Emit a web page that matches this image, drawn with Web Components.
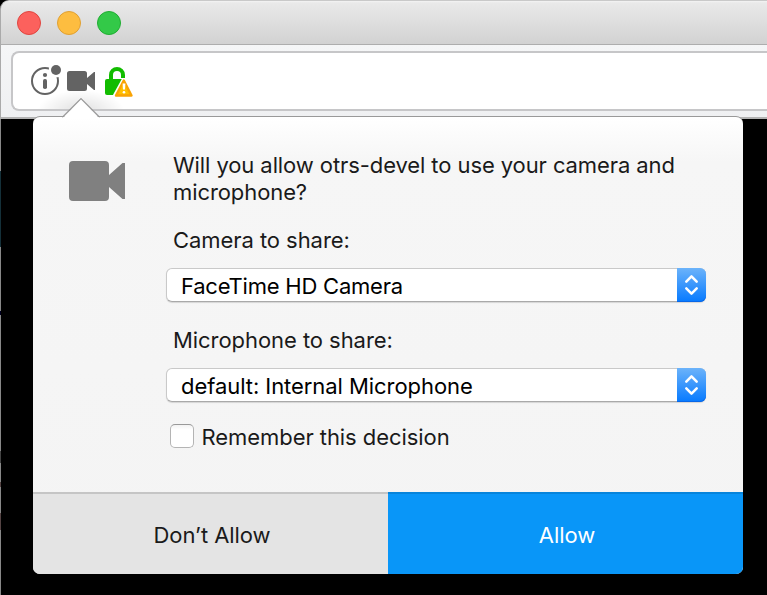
<!DOCTYPE html>
<html lang="en">
<head>
<meta charset="utf-8">
<title>Permission request</title>
<style>
html, body { margin: 0; height: 100%; overflow: hidden; background: #000; }
body { font-family: Inter, "Liberation Sans", sans-serif; font-size: 22px; letter-spacing: -0.06px; color: #1a1a1a; }
</style>
</head>
<body>
<browser-window></browser-window>
<script>
const define = (name, html) => customElements.define(name, class extends HTMLElement {
  constructor() {
    super();
    this.attachShadow({ mode: 'open' }).innerHTML = html;
  }
});

define('title-bar', `
<style>
:host { display: flex; box-sizing: border-box; height: 45px; padding: 11px 0 0 15px; gap: 14px;
  background: linear-gradient(#f4f4f4 0, #e9e9e9 2px, #d2d2d2 43px); border-bottom: 1px solid #adadad;
  border-top: 1px solid #c9c9c9; border-left: 1px solid #aaa; border-top-left-radius: 9px; }
i { box-sizing: border-box; width: 24px; height: 24px; margin: -1px 1px; border-radius: 50%; border: 1px solid; }
.r { background: #fc615d; border-color: #e0453f; }
.y { background: #fdbd40; border-color: #e0a032; }
.g { background: #33c948; border-color: #20ad32; }
</style><i class="r"></i><i class="y"></i><i class="g"></i>`);

define('tool-bar', `
<style>
:host { display: block; box-sizing: border-box; height: 74px; padding: 6px 0 0 10px;
  background: linear-gradient(#f5f6f7, #eff0f2); border-bottom: 2px solid #b3b3b3; border-left: 1px solid #aaa; }
.url { box-sizing: border-box; height: 60px; border: 2px solid #c6c6c8; border-right: 0;
  border-radius: 8px 0 0 8px; background: #fff; }
svg { display: block; }
</style>
<div class="url"><svg width="130" height="56" viewBox="13 53 130 56">
  <defs><radialGradient id="g"><stop offset="0" stop-color="#000" stop-opacity=".13"/><stop offset="1" stop-color="#000" stop-opacity="0"/></radialGradient></defs>
  <ellipse cx="81" cy="112" rx="44" ry="22" fill="url(#g)"/>
  <circle cx="45" cy="81" r="13" fill="none" stroke="#636363" stroke-width="2"/>
  <circle cx="56" cy="70" r="7.4" fill="#fff"/>
  <circle cx="56" cy="70" r="5" fill="#636363"/>
  <circle cx="45" cy="75" r="2.1" fill="#636363"/>
  <rect x="43" y="79" width="4" height="10" rx="1.8" fill="#636363"/>
  <path d="M69.500 71h15a2.500 2.500 0 0 1 2.500 2.500v4.500l7-6h1v18h-1l-7-6v4.500a2.500 2.500 0 0 1-2.500 2.500H69.500a2.500 2.500 0 0 1-2.500-2.500v-15a2.500 2.500 0 0 1 2.500-2.500z" fill="#636363"/>
  <path d="M111 80v-5a6 6 0 0 1 12 0V78" fill="none" stroke="#12bc00" stroke-width="4"/>
  <rect x="105" y="79" width="19" height="16" rx="2" fill="#12bc00"/>
  <path d="M123.800 80.500L132 95.500H115.500z" fill="#fff" stroke="#fff" stroke-width="5" stroke-linejoin="round"/>
  <path d="M123.800 80.500L131.500 95.500H116z" fill="#ffbf00" stroke="#f9a305" stroke-width="2.400" stroke-linejoin="round"/>
  <path d="M122.600 83.500h2.800l-.4 6h-2z" fill="#fff"/><circle cx="124" cy="92.200" r="1.300" fill="#fff"/>
</svg></div>`);

define('pop-select', `
<style>
:host { display: flex; box-sizing: border-box; width: 540px; height: 34px; border: 1px solid #c9c9c9;
  border-bottom-color: #a9a9a9; border-radius: 6px; background: #fff; color: #000; box-shadow: 0 1px 1px #0002; }
.v { flex: 1; padding-left: 14px; line-height: 35px; }
.b { width: 29px; margin: -1px -1px -1px 0; border-radius: 0 6px 6px 0;
  background: linear-gradient(#6cb3fa, #067aff); box-shadow: inset 0 -1px 0 #0867e8; }
svg { display: block; }
</style>
<div class="v"><slot></slot></div>
<div class="b"><svg width="29" height="34" viewBox="0 0 29 34" fill="none" stroke="#fff" stroke-width="2.500" stroke-linecap="round" stroke-linejoin="round"><path d="M9.300 13.700L14.500 8.300l5.200 5.400M9.300 20.300l5.200 5.400 5.200-5.400"/></svg></div>`);

define('check-box', `
<style>
:host { display: flex; align-items: flex-start; gap: 7.5px; line-height: 27px; }
i { box-sizing: border-box; width: 24px; height: 24px; border: 1px solid #b4b4b4; border-top-color: #999; border-radius: 5px;
  background: linear-gradient(#f3f3f3, #fff 5px); }
</style><i></i><slot></slot>`);

define('push-button', `
<style>
:host { flex: 1; box-sizing: border-box; height: 82px; border-top: 2px solid #c5c5c5; background: #e4e4e4;
  line-height: 83px; text-align: center; text-indent: 3px; }
:host([primary]) { background: #0996f8; border-color: #0784db; color: #fff; }
</style><slot></slot>`);

define('permission-panel', `
<style>
:host { display: block; position: absolute; left: 33px; top: 117px; width: 710px; height: 457px; }
.panel { position: relative; display: flex; flex-direction: column; height: 100%; overflow: hidden; border-radius: 7px;
  background: linear-gradient(#fff, #f6f6f6 45px, #f4f4f4); }
.shadow { position: absolute; inset: -1px 0 1px 0; border-radius: 7px; background: #999; }
.arrow { position: absolute; left: 28px; top: -21px; }
.main { display: flex; flex: 1; }
.cam { margin: 44px 0 0 36px; }
.body { display: flex; flex-direction: column; margin: 35px 0 0 41px; }
p { margin: 0 0 0 7px; line-height: 27px; white-space: nowrap; }
.a { letter-spacing: -0.09px; }
.foot { display: flex; }
</style>
<div class="shadow"></div>
<div class="panel">
  <div class="main">
    <svg class="cam" width="56" height="40" viewBox="0 0 56 40"><path d="M4 0h32a4 4 0 0 1 4 4v10L53.500 2H56v36h-2.500L40 26v10a4 4 0 0 1-4 4H4a4 4 0 0 1-4-4V4a4 4 0 0 1 4-4z" fill="#808080"/></svg>
    <div class="body">
      <p class="a">Will you allow otrs-devel to use your camera and<br>microphone?</p>
      <p style="margin-top:21px">Camera to share:</p>
      <pop-select style="margin-top:14px;letter-spacing:-0.22px">FaceTime HD Camera</pop-select>
      <p style="margin-top:25px">Microphone to share:</p>
      <pop-select style="margin-top:14px">default: Internal Microphone</pop-select>
      <check-box style="margin:22px 0 0 4px">Remember this decision</check-box>
    </div>
  </div>
  <div class="foot"><push-button>Don’t Allow</push-button><push-button primary>Allow</push-button></div>
</div>
<svg class="arrow" width="40" height="24" viewBox="28 -21 40 24"><path d="M29.500 1.500L48 -17.800L66.500 1.500z" fill="#fff"/><path d="M29 0L30.200 -.5L48 -18.300L65.800 -.5L67 0" fill="none" stroke="#999" stroke-width="1.200"/></svg>`);

define('browser-window', `
<style>
:host { display: block; position: relative; height: 595px; background: #000; }
.edge { width: 1px; height: 476px; background: linear-gradient(#888 52px, #143039 52px 128px, #888 128px 192px, #002 192px 196px, #888 196px 332px, #444 332px 344px, #888 344px 363px, #544 363px 368px, #888 368px 394px, #544 394px 411px, #888 411px); }
</style>
<title-bar></title-bar><tool-bar></tool-bar><div class="edge"></div>
<permission-panel></permission-panel>`);
</script>
</body>
</html>
